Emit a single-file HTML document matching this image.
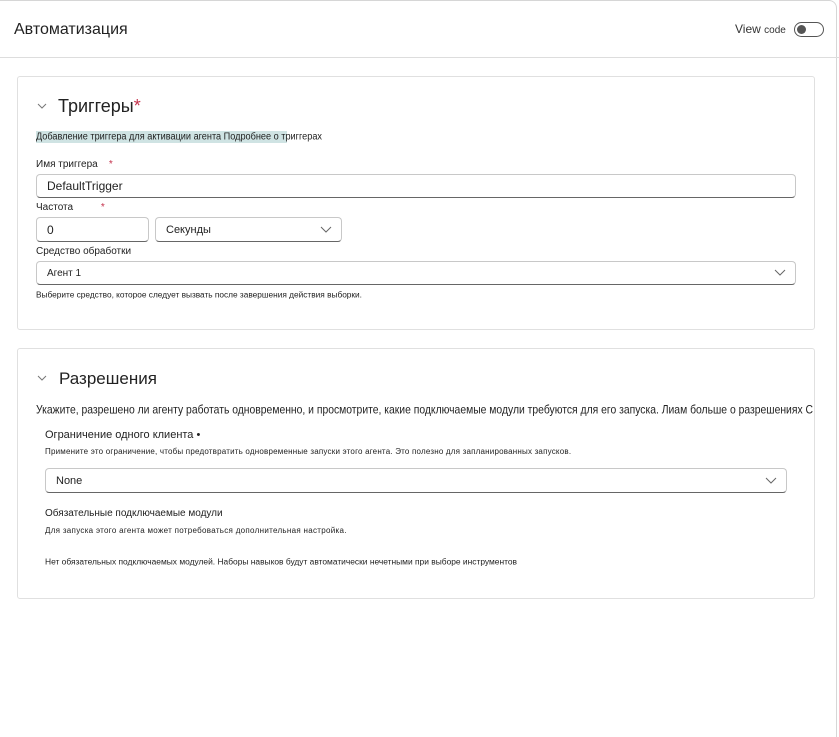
<!DOCTYPE html>
<html><head><meta charset="utf-8"><style>
*{margin:0;padding:0;box-sizing:border-box}
html,body{width:839px;height:737px;overflow:hidden}
body{background:#fff;font-family:"Liberation Sans","DejaVu Sans",sans-serif;color:#222;position:relative}
.a{position:absolute;white-space:nowrap}
.frame{position:absolute;left:-3px;top:0;width:840px;height:737px;border:1px solid #d6d6d6;border-bottom:none;border-radius:0 8px 0 0}
.card{position:absolute;left:17px;width:798px;border:1px solid #e0e0e0;border-radius:3px;background:#fff}
.inp{position:absolute;border:1px solid #c8c8c8;border-bottom:1px solid #666;border-radius:4px;background:#fff;font-size:12px;padding-left:10px;display:flex;align-items:center}
.chev{position:absolute;right:9px;top:50%;margin-top:-4px}
.star{color:#c4314b}
svg.t{position:absolute}
svg.t text{font-family:"Liberation Sans","DejaVu Sans",sans-serif;fill:#222}
</style></head><body>
<div class="frame"></div>
<div class="a" style="left:14px;top:21px;font-size:16px;color:#222">Автоматизация</div>
<div class="a" style="left:735px;top:22px;font-size:12px;color:#333">View <span style="font-size:10px">code</span></div>
<div class="a" style="left:794px;top:22px;width:30px;height:15px;border:1px solid #555;border-radius:8px"><div style="position:absolute;left:2px;top:2px;width:9px;height:9px;border-radius:50%;background:#555"></div></div>
<div class="a" style="left:0;top:57px;width:839px;height:1px;background:#ddd"></div>

<div class="card" style="top:76px;height:254px"></div>
<svg class="a" style="left:37px;top:103px" width="10" height="6"><path d="M1 1 L5 5 L9 1" stroke="#777" fill="none"/></svg>
<div class="a" style="left:58px;top:96px;font-size:18px">Триггеры<span class="star">*</span></div>
<div class="a" style="left:36px;top:131px;background:#cfe3e3;width:251px;height:12px"></div>
<svg class="t" style="left:36px;top:130px" width="288" height="12"><text x="0" y="9.5" font-size="10" textLength="286" lengthAdjust="spacingAndGlyphs">Добавление триггера для активации агента Подробнее о триггерах</text></svg>
<div class="a" style="left:36px;top:159px;font-size:10px">Имя триггера &nbsp;&nbsp;&nbsp;<span class="star">*</span></div>
<div class="inp" style="left:36px;top:174px;width:760px;height:24px">DefaultTrigger</div>
<div class="a" style="left:36px;top:202px;font-size:10px">Частота &nbsp;&nbsp;&nbsp;&nbsp;&nbsp;&nbsp;&nbsp;&nbsp;&nbsp;<span class="star">*</span></div>
<div class="inp" style="left:36px;top:217px;width:113px;height:25px">0</div>
<div class="inp" style="left:155px;top:217px;width:187px;height:25px;font-size:11px">Секунды<svg class="chev" width="12" height="8"><path d="M1 1 L6 6 L11 1" stroke="#666" fill="none"/></svg></div>
<div class="a" style="left:36px;top:246px;font-size:10px">Средство обработки</div>
<div class="inp" style="left:36px;top:261px;width:760px;height:24px;font-size:10px">Агент 1<svg class="chev" width="12" height="8"><path d="M1 1 L6 6 L11 1" stroke="#666" fill="none"/></svg></div>
<svg class="t" style="left:36px;top:290px" width="328" height="10"><text x="0" y="7.5" font-size="8" textLength="326" lengthAdjust="spacingAndGlyphs">Выберите средство, которое следует вызвать после завершения действия выборки.</text></svg>

<div class="card" style="top:348px;height:251px"></div>
<svg class="a" style="left:37px;top:375px" width="10" height="6"><path d="M1 1 L5 5 L9 1" stroke="#777" fill="none"/></svg>
<div class="a" style="left:59px;top:369px;font-size:17px">Разрешения</div>
<svg class="t" style="left:36px;top:402px" width="779" height="15"><text x="0" y="11.5" font-size="12" textLength="777" lengthAdjust="spacingAndGlyphs">Укажите, разрешено ли агенту работать одновременно, и просмотрите, какие подключаемые модули требуются для его запуска. Лиам больше о разрешениях С</text></svg>
<div class="a" style="left:45px;top:429px;font-size:11px">Ограничение одного клиента •</div>
<div class="a" style="left:45px;top:447px;font-size:8px;letter-spacing:.2px">Примените это ограничение, чтобы предотвратить одновременные запуски этого агента. Это полезно для запланированных запусков.</div>
<div class="inp" style="left:45px;top:468px;width:742px;height:25px;font-size:11px">None<svg class="chev" width="12" height="8"><path d="M1 1 L6 6 L11 1" stroke="#666" fill="none"/></svg></div>
<div class="a" style="left:45px;top:508px;font-size:10px">Обязательные подключаемые модули</div>
<div class="a" style="left:45px;top:526px;font-size:8px;letter-spacing:.3px">Для запуска этого агента может потребоваться дополнительная настройка.</div>
<svg class="t" style="left:45px;top:557px" width="474" height="10"><text x="0" y="7.5" font-size="8" textLength="472" lengthAdjust="spacingAndGlyphs">Нет обязательных подключаемых модулей. Наборы навыков будут автоматически нечетными при выборе инструментов</text></svg>
</body></html>
